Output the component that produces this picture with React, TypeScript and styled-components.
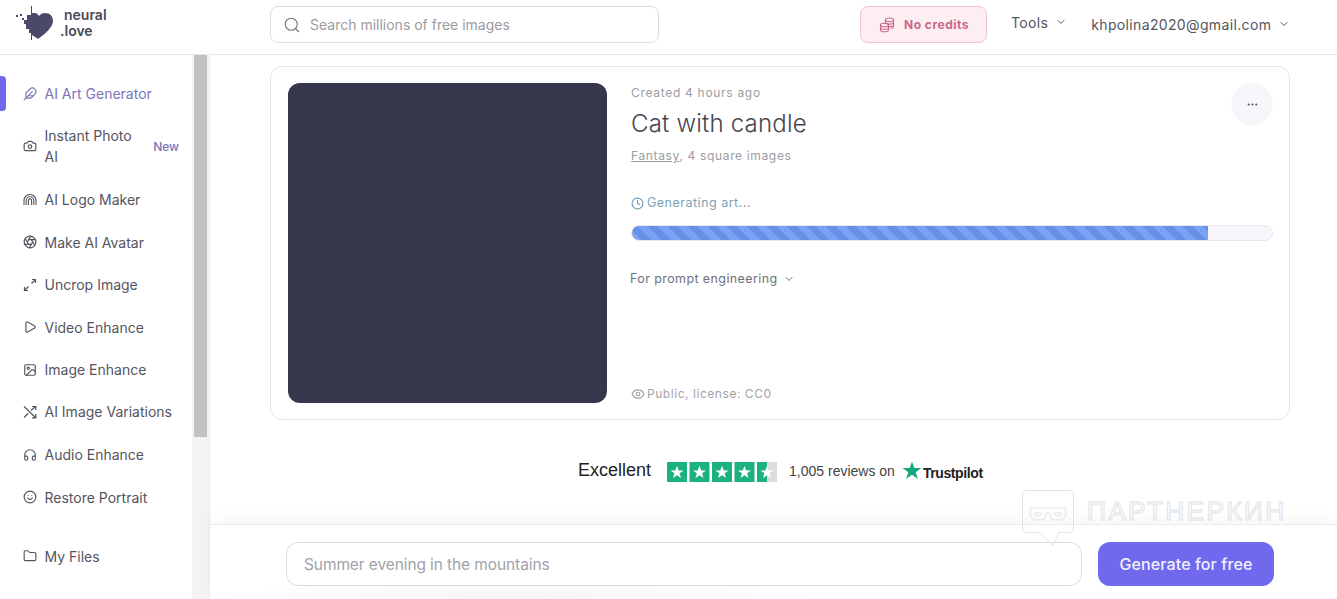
import React from 'react';
import styled, { createGlobalStyle } from 'styled-components';
import { Aperture, Camera, ChevronDown, Clock, Eye, Feather, Folder, Headphones, Image as ImageIcon, MoreHorizontal, Play, Search, Smile } from 'lucide-react';

const Global = createGlobalStyle`
  html, body { margin: 0; padding: 0; background: #fff; }
  body { font-family: Inter, "Liberation Sans", sans-serif; color: #4b4b55; overflow: hidden; }
  * { box-sizing: border-box; }
`;

const Page = styled.div`
  width: 1337px; height: 599px; display: flex; flex-direction: column; position: relative; overflow: hidden; background: #fff;
`;
const Header = styled.header`
  height: 55px; flex: none; display: flex; align-items: center; border-bottom: 1px solid #e9e9ec; background: #fff;
`;
const Brand = styled.div`
  width: 270px; display: flex; align-items: center; padding-left: 15px; gap: 9px; flex: none; margin-top: -8px;
`;
const BrandText = styled.div`
  font-size: 14px; font-weight: 600; line-height: 16px; color: #4a4a58;
`;
const BrandLine = styled.div<{ $shift?: number }>`
  margin-left: ${p => p.$shift ?? 0}px;
`;
const SearchBox = styled.div`
  width: 389px; height: 37px; border: 1px solid #dcdce0; border-radius: 8px; display: flex; align-items: center; padding-left: 12px; gap: 9px;
  font-size: 14px; color: #9b9ba3; flex: none; margin-top: -5px;
`;
const CreditBtn = styled.div`
  margin-left: 201px; width: 127px; height: 37px; border: 1px solid #eec4d0; border-radius: 8px; background: #fdeff1; display: flex; align-items: center; justify-content: center; gap: 9px;
  font-size: 12px; font-weight: 700; color: #c9688c; flex: none; margin-top: -5px; padding-left: 1px; letter-spacing: 0.5px;
`;
const TopLink = styled.div<{ $left: number; $lift: number }>`
  margin-left: ${p => p.$left}px; display: flex; align-items: center; font-size: 14px; color: #55555f; gap: 7px; flex: none; margin-top: ${p => p.$lift}px; letter-spacing: 0.35px;
`;
const Body = styled.div`
  flex: 1; display: flex; min-height: 0;
`;
const Sidebar = styled.nav`
  width: 192px; flex: none; padding-top: 17.300px; display: flex; flex-direction: column; position: relative; background: #fff;
`;
const Row = styled.div<{ $active?: boolean; $gap?: number }>`
  display: flex; align-items: center; padding: 10.750px 13px 10.750px 23px; font-size: 14px; line-height: 21px; gap: 7.500px;
  color: ${p => (p.$active ? '#7b76b8' : '#55555f')};
  margin-top: ${p => p.$gap ?? 0}px;
  svg { flex: none; }
`;
const RowLabel = styled.span`
  flex: 1;
`;
const NewTag = styled.span`
  font-size: 12px; font-weight: 500; color: #7a74b8; flex: none;
`;
const ActiveBar = styled.div`
  position: absolute; left: 0; top: 21px; width: 6px; height: 35px; border-radius: 0 4px 4px 0; background: #7069ee;
`;
const Track = styled.div`
  width: 18px; flex: none; background: #f3f3f4; padding-left: 2px; border-right: 1px solid #ededf0;
`;
const Thumb = styled.div`
  width: 13px; height: 382px; background: #c1c1c1;
`;
const Main = styled.main`
  flex: 1; display: flex; flex-direction: column; min-width: 0; background: #fff;
`;
const Content = styled.div`
  flex: 1; padding: 11px 47px 0 60px; min-height: 0;
`;
const Card = styled.article`
  height: 354px; border: 1px solid #e6e6ea; border-radius: 12px; padding: 16px 16px 16px 17px; display: flex; gap: 24px; background: #fff;
`;
const Artwork = styled.div`
  width: 319px; height: 320px; background: #37374b; border-radius: 12px; flex: none;
`;
const Info = styled.div`
  flex: 1; display: flex; flex-direction: column; position: relative; min-width: 0; padding-top: 1px;
`;
const Created = styled.div`
  font-size: 12px; line-height: 18px; color: #9c9ca4; letter-spacing: 0.7px;
`;
const Title = styled.h1`
  margin: 6px 0 0; font-size: 24px; line-height: 32px; font-weight: 300; color: #45454f; letter-spacing: 0.220px;
`;
const Meta = styled.div`
  margin-top: 7px; font-size: 12px; line-height: 18px; color: #9c9ca4; letter-spacing: 0.650px;
`;
const MetaLink = styled.span`
  text-decoration: underline;
`;
const Status = styled.div`
  margin-top: 29px; display: flex; align-items: center; gap: 3px; font-size: 12.500px; line-height: 18px; color: #7d9fb5; letter-spacing: 0.500px;
`;
const ProgressTrack = styled.div`
  margin-top: 13px; height: 16px; border: 1px solid #e8e8ee; border-radius: 8px; background: #f5f5fb; overflow: hidden;
`;
const ProgressFill = styled.div`
  height: 100%;
  background: repeating-linear-gradient(45deg, #7aa2f2 0 7px, #6590e6 7px 14px);
`;
const Prompt = styled.div`
  margin-top: 29px; margin-left: -1px; display: flex; align-items: center; gap: 5px; font-size: 12.500px; line-height: 18px; color: #71717b; letter-spacing: 0.400px;
`;
const License = styled.div`
  margin-top: auto; display: flex; align-items: center; gap: 2px; font-size: 12px; line-height: 18px; color: #a2a2aa; letter-spacing: 0.550px;
`;
const MoreBtn = styled.div`
  position: absolute; right: 0; top: 0; width: 42px; height: 42px; border-radius: 50%; background: #f6f6fb; display: flex; align-items: center; justify-content: center; color: #55555f;
`;
const Trust = styled.div`
  margin-top: 41px; display: flex; align-items: center; font-family: "Liberation Sans", Arial, sans-serif; color: #222; padding-left: 308px;
`;
const Excellent = styled.span`
  font-size: 18px; margin-right: 16px; position: relative; top: -1px;
`;
const Stars = styled.svg`
  width: 110px; height: 20px; flex: none; margin-right: 12px;
`;
const Reviews = styled.span`
  font-size: 14px; color: #444; margin-right: 7px; position: relative; top: -1px;
`;
const TpStarBox = styled.svg`
  width: 20px; height: 20px; flex: none; margin-top: -2px;
`;
const TpName = styled.span`
  font-size: 14px; font-weight: 700; color: #222; margin-left: 1px; position: relative; top: 1px; letter-spacing: -0.4px;
`;
const Footer = styled.div`
  height: 75px; flex: none; border-top: 1px solid #ececef; box-shadow: 0 -6px 14px rgba(0,0,0,0.03); display: flex; align-items: flex-start; padding: 17px 63px 0 76px; gap: 16px; position: relative;
  background: radial-gradient(ellipse 300px 28px at 310px 78px, #f3f3f3, #fff 100%);
`;
const PromptInput = styled.div`
  flex: 1; height: 44px; border: 1px solid #dcdce0; border-radius: 12px; background: #fff; display: flex; align-items: center; padding-left: 17px; font-size: 15.500px; letter-spacing: -0.100px; color: #a2a2aa;
`;
const GenerateBtn = styled.div`
  width: 176px; height: 44px; border-radius: 12px; background: #7069ee; color: #f2f1ff; display: flex; align-items: center; justify-content: center; font-size: 16px; font-weight: 500; letter-spacing: 0.120px;
`;
const Watermark = styled.div`
  position: absolute; left: 1022px; top: 490px; display: flex; align-items: flex-start; gap: 13px; pointer-events: none;
`;
const WatermarkText = styled.span`
  font-family: "Liberation Sans", Arial, sans-serif; font-size: 26.500px; line-height: 42px; letter-spacing: 2.200px; color: transparent; -webkit-text-stroke: 1px #e2e2e4;
`;

const Logo = () => (
  <svg width="40" height="36" viewBox="0 0 40 36">
    <path fill="#4a4a68" d="M17 8h3c2 0 3 1.500 4 3 1.500-2 3.500-3 6-3 5 0 8 3.500 8 8 0 6-8 13-15 18l-6-4v-2h-3v-4h-3v-5H9v-4h3v-5h5z"/>
    <path fill="#4a4a68" d="M1 10h2v2H1zM5 9h2v2H5zM7 13h2v2H7z"/>
    <rect x="16" y="1" width="1" height="34" fill="#4a4a68"/>
  </svg>
);

const Coins = () => (
  <svg width="16" height="16" viewBox="0 0 16 16" fill="none" stroke="#c9688c" strokeWidth="1.100">
    <ellipse cx="10.500" cy="2.800" rx="4" ry="1.800"/>
    <path d="M6.500 2.800v3M14.500 2.800v7c0 .8-1 1.400-2.500 1.700M6.500 5.300c0 1 1.800 1.800 4 1.800s4-.8 4-1.800M10 9.600c.2 0 .3 0 .5 0 2.200 0 4-.8 4-1.800"/>
    <ellipse cx="5.500" cy="8" rx="4" ry="1.800"/>
    <path d="M1.500 8v5c0 1 1.800 1.800 4 1.800s4-.8 4-1.800V8M1.500 10.500c0 1 1.800 1.800 4 1.800s4-.8 4-1.800"/>
  </svg>
);

const Uncrop = () => (
  <svg width="14" height="14" viewBox="0 0 14 14" fill="none" stroke="#55555f" strokeWidth="1.200">
    <path d="M8.500 5.500 12.500 1.500M9 1.500h3.500V5M1.500 12.500l4-4M1.500 9v3.500H5"/>
  </svg>
);

const Arches = () => (
  <svg width="14" height="14" viewBox="0 0 14 14" fill="none" stroke="#55555f" strokeWidth="1.100">
    <path d="M1 12V7.500a6 6 0 0 1 12 0V12M3.200 12V7.500a3.800 3.800 0 0 1 7.600 0V12M5.400 12V7.500a1.600 1.600 0 0 1 3.200 0V12"/>
  </svg>
);

const Crossed = () => (
  <svg width="14" height="14" viewBox="0 0 14 14" fill="none" stroke="#55555f" strokeWidth="1.200">
    <path d="M1 1.500 12.500 12.500M1 12.500l4.300-4.200M8 5.500 12.500 1.500M9 1.500h3.800V5M9 12.800h3.800V9"/>
  </svg>
);

const star = 'M0 -6.800 L1.700 -2.100 L6.500 -2.100 L2.600 0.800 L4 5.500 L0 2.700 L-4 5.500 L-2.600 0.800 L-6.500 -2.100 L-1.700 -2.100 Z';

const StarRow = () => (
  <Stars viewBox="0 0 110 20">
    {[0, 1, 2, 3].map(i => <rect key={i} x={i * 22.500} width="20" height="20" fill="#1cb27e" />)}
    <rect x="90" width="20" height="20" fill="#dcdce0" />
    <rect x="90" width="10" height="20" fill="#1cb27e" />
    {[0, 1, 2, 3, 4].map(i => <path key={i} d={star} fill="#fff" transform={`translate(${10 + i * 22.500} 10.500)`} />)}
  </Stars>
);

const TpStar = () => (
  <TpStarBox viewBox="-10 -10 20 20"><path d="M0 -9.500 L2.300 -3 L9.500 -3 L3.700 1.200 L5.900 8 L0 3.800 L-5.900 8 L-3.700 1.200 L-9.500 -3 L-2.300 -3 Z" fill="#14a87c" /></TpStarBox>
);

const WatermarkIcon = () => (
  <svg width="52" height="58" viewBox="0 0 52 58" fill="none" stroke="#e2e2e4" strokeWidth="1">
    <path d="M4 .5h44a3.500 3.500 0 0 1 3.500 3.500v35a3.500 3.500 0 0 1-3.500 3.500H37l-6 13-13-13H4A3.500 3.500 0 0 1 .5 39V4A3.500 3.500 0 0 1 4 .5z"/>
    <path d="M8 18h36v5c0 4-3 7-7 7h-4c-3 0-5-3-5-7h-4c0 4-2 7-5 7h-4c-4 0-7-3-7-7z"/>
    <path d="M12 23h8c0 2-1 3-3 3h-2c-2 0-3-1-3-3zM32 23h8c0 2-1 3-3 3h-2c-2 0-3-1-3-3z"/>
  </svg>
);

const items: { label: string; icon: React.ReactNode; active?: boolean; tag?: string; gap?: number }[] = [
  { label: 'AI Art Generator', icon: <Feather size={14} color="#7b76b8" />, active: true },
  { label: 'Instant Photo AI', icon: <Camera size={14} />, tag: 'New', gap: -0.300 },
  { label: 'AI Logo Maker', icon: <Arches />, gap: 0.300 },
  { label: 'Make AI Avatar', icon: <Aperture size={14} /> },
  { label: 'Uncrop Image', icon: <Uncrop /> },
  { label: 'Video Enhance', icon: <Play size={14} /> },
  { label: 'Image Enhance', icon: <ImageIcon size={14} /> },
  { label: 'AI Image Variations', icon: <Crossed />, gap: -0.300 },
  { label: 'Audio Enhance', icon: <Headphones size={14} />, gap: 0.300 },
  { label: 'Restore Portrait', icon: <Smile size={14} /> },
  { label: 'My Files', icon: <Folder size={14} />, gap: 16.500 },
];

export default function App() {
  return (
    <Page>
      <Global />
      <Header>
        <Brand>
          <Logo />
          <BrandText>
            <BrandLine>neural</BrandLine>
            <BrandLine $shift={-4}>.love</BrandLine>
          </BrandText>
        </Brand>
        <SearchBox><Search size={18} color="#77777f" strokeWidth={1.500} />Search millions of free images</SearchBox>
        <CreditBtn><Coins />No credits</CreditBtn>
        <TopLink $left={24} $lift={-10}>Tools <ChevronDown size={12} /></TopLink>
        <TopLink $left={24} $lift={-6}>khpolina2020@gmail.com <ChevronDown size={12} /></TopLink>
      </Header>
      <Body>
        <Sidebar>
          <ActiveBar />
          {items.map(it => (
            <Row key={it.label} $active={it.active} $gap={it.gap}>
              {it.icon}
              <RowLabel>{it.label}</RowLabel>
              {it.tag && <NewTag>{it.tag}</NewTag>}
            </Row>
          ))}
        </Sidebar>
        <Track><Thumb /></Track>
        <Main>
          <Content>
            <Card>
              <Artwork />
              <Info>
                <Created>Created 4 hours ago</Created>
                <Title>Cat with candle</Title>
                <Meta><MetaLink>Fantasy</MetaLink>, 4 square images</Meta>
                <Status><Clock size={13} color="#6f9ab5" />Generating art...</Status>
                <ProgressTrack><ProgressFill style={{ width: '90%' }} /></ProgressTrack>
                <Prompt>For prompt engineering <ChevronDown size={12} /></Prompt>
                <License><Eye size={14} />Public, license: CC0</License>
                <MoreBtn><MoreHorizontal size={13} /></MoreBtn>
              </Info>
            </Card>
            <Trust>
              <Excellent>Excellent</Excellent>
              <StarRow />
              <Reviews>1,005 reviews on</Reviews>
              <TpStar />
              <TpName>Trustpilot</TpName>
            </Trust>
          </Content>
          <Footer>
            <PromptInput>Summer evening in the mountains</PromptInput>
            <GenerateBtn>Generate for free</GenerateBtn>
          </Footer>
        </Main>
      </Body>
      <Watermark>
        <WatermarkIcon />
        <WatermarkText>ПАРТНЕРКИН</WatermarkText>
      </Watermark>
    </Page>
  );
}
